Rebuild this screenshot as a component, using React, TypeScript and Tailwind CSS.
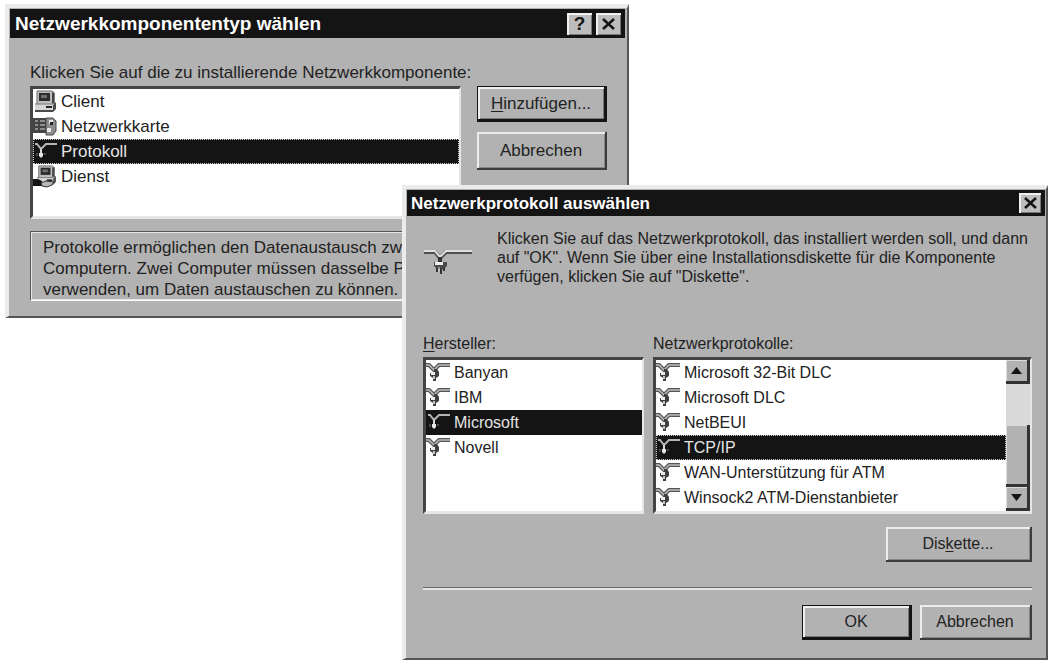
import { useState, type ReactNode } from "react";

type IconName = "client" | "card" | "protocol" | "service";

type ListItem = {
  label: string;
  icon: IconName;
};

const COMPONENT_TYPES: ListItem[] = [
  { label: "Client", icon: "client" },
  { label: "Netzwerkkarte", icon: "card" },
  { label: "Protokoll", icon: "protocol" },
  { label: "Dienst", icon: "service" },
];

const VENDORS: ListItem[] = [
  { label: "Banyan", icon: "protocol" },
  { label: "IBM", icon: "protocol" },
  { label: "Microsoft", icon: "protocol" },
  { label: "Novell", icon: "protocol" },
];

const PROTOCOLS: ListItem[] = [
  { label: "Microsoft 32-Bit DLC", icon: "protocol" },
  { label: "Microsoft DLC", icon: "protocol" },
  { label: "NetBEUI", icon: "protocol" },
  { label: "TCP/IP", icon: "protocol" },
  { label: "WAN-Unterstützung für ATM", icon: "protocol" },
  { label: "Winsock2 ATM-Dienstanbieter", icon: "protocol" },
];

/* ---------------- ICONS ---------------- */

function Computer() {
  return (
    <>
      <path d="M2 1h16l2 2v11H2z" fill="#7d7d7d" />
      <path d="M2 1h15v13H2z" fill="#bdbdbd" />
      <path d="M2 1h15M2 1v13" stroke="#6b6b6b" fill="none" />
      <path d="M4 3h11v8H4z" fill="#2b2b2b" />
      <path d="M6 5h6v3H6z" fill="#6f6f6f" />
      <path d="M0 15h18l3-3v7l-3 3H0z" fill="#4a4a4a" />
      <path d="M0 14h18v6H0z" fill="#d6d6d6" />
      <path d="M0 14h18" stroke="#777" />
      <path d="M11 17h6" stroke="#222" strokeWidth="2" />
      <path d="M18 3v10" stroke="#444" strokeWidth="2" />
    </>
  );
}

function ItemIcon({ name, selected }: { name: IconName; selected: boolean }) {
  if (name === "client") {
    return (
      <svg width="24" height="23" viewBox="0 0 24 23" aria-hidden="true">
        <g transform="translate(2 0)">
          <Computer />
        </g>
      </svg>
    );
  }
  if (name === "service") {
    return (
      <svg width="24" height="23" viewBox="0 0 24 23" aria-hidden="true">
        <g transform="translate(4 0) scale(.9)">
          <Computer />
        </g>
        <path d="M0 14h5l4 2v5H0z" fill="#141414" />
        <path d="M8 18l5-2 8 1-2 3-5 2-5-1z" fill="#b8b8b8" stroke="#333" />
      </svg>
    );
  }
  if (name === "card") {
    return (
      <svg width="24" height="23" viewBox="0 0 24 23" aria-hidden="true">
        <path d="M0 3h13v15H0z" fill="#444" />
        <path d="M2 6h3M2 10h3M2 14h3M7 6h5M7 10h5M7 14h5" stroke="#a5a5a5" strokeWidth="1.500" />
        <path d="M13 3h7l3 3v10l-3 4h-7z" fill="#8d8d8d" stroke="#4a4a4a" />
        <path d="M16 5h4v4h-4zM14 13h4v4h-4z" fill="#e8e8e8" />
        <path d="M17 7h3v3h-3z" fill="#222" />
      </svg>
    );
  }
  return (
    <svg width="24" height="23" viewBox="0 0 24 23" fill="none" aria-hidden="true">
      {selected ? (
        <>
          <path d="M2 4h2l4 5 5-5h11" stroke="#b5b5b5" strokeWidth="2" />
          <path d="M8 9v4" stroke="#d8d8d8" strokeWidth="2" />
          <path d="M6 13h4v3l-2 2-2-2z" fill="#e5e5e5" />
          <path d="M4 13v3M12 13v2" stroke="#777" />
        </>
      ) : (
        <>
          <path d="M0 4h3l5 5 5-5h11" stroke="#555" strokeWidth="4" />
          <path d="M0 4h3l5 5 5-5h11" stroke="#bdbdbd" strokeWidth="1.500" />
          <path d="M8 8h3l2 3v4l-3 2v3H7v-3l-3-2v-3h4z" fill="#3f3f3f" />
          <path d="M5 11h4v3H5z" fill="#ececec" />
          <path d="M7 15h2v3H7z" fill="#c4c4c4" />
        </>
      )}
    </svg>
  );
}

function CableIcon() {
  return (
    <svg width="50" height="28" viewBox="0 0 50 28" fill="none" aria-hidden="true">
      <path d="M1 5h11l5 6 6-6h26" stroke="#4f4f4f" strokeWidth="4" />
      <path d="M1 4h11l5 6 6-6h26" stroke="#dedede" strokeWidth="2" />
      <path d="M17 10v6" stroke="#333" strokeWidth="4" />
      <path d="M11 15h13v4l-3 3h-7l-3-3z" fill="#4a4a4a" />
      <path d="M12 15h8v3h-8z" fill="#efefef" />
      <path d="M14 21v4M18 21v6M21 21v3" stroke="#333" strokeWidth="2" />
      <path d="M16 20v4" stroke="#ddd" />
    </svg>
  );
}

function CloseGlyph() {
  return (
    <svg width="13" height="12" viewBox="0 0 13 12" aria-hidden="true">
      <path d="M1 1l11 10M12 1L1 11" stroke="#141414" strokeWidth="2.500" />
    </svg>
  );
}

/* ---------------- CONTROLS ---------------- */

function Button({
  children,
  primary = false,
  className,
}: {
  children: ReactNode;
  primary?: boolean;
  className: string;
}) {
  const edge = primary
    ? "border-t border-l border-b-3 border-r-3 border-[#141414] shadow-[inset_2px_2px_0_#f0f0f0,inset_-1px_-1px_0_#777]"
    : "border-b-2 border-r-2 border-[#3c3c3c] shadow-[inset_2px_2px_0_#ececec,inset_-1px_-1px_0_#858585]";
  return (
    <button type="button" className={`flex items-center justify-center bg-[#b2b2b2] ${edge} ${className}`}>
      {children}
    </button>
  );
}

function TitleButton({ label, className, children }: { label: string; className: string; children: ReactNode }) {
  return (
    <button
      type="button"
      aria-label={label}
      className={`flex items-center justify-center bg-[#bdbdbd] font-bold text-[#141414] shadow-[inset_2px_2px_0_#f0f0f0,inset_-1px_-1px_0_#777] ${className}`}
    >
      {children}
    </button>
  );
}

function ListBox({
  name,
  items,
  initial,
  focused = false,
}: {
  name: string;
  items: ListItem[];
  initial: string;
  focused?: boolean;
}) {
  const [value, setValue] = useState(initial);
  return (
    <div role="radiogroup" aria-labelledby={`${name}-label`} className="min-w-0 flex-1">
      {items.map((item) => {
        const selected = item.label === value;
        return (
          <label
            key={item.label}
            className={`flex h-[25px] items-center gap-1 ${
              selected ? "bg-[#141414] text-[#e4e4e4]" : "text-[#222]"
            } ${selected && focused ? "outline-1 -outline-offset-1 outline-dotted outline-[#d0d0d0]" : ""}`}
          >
            <input
              type="radio"
              name={name}
              checked={selected}
              onChange={() => setValue(item.label)}
              className="sr-only"
            />
            <ItemIcon name={item.icon} selected={selected} />
            <span className="whitespace-nowrap">{item.label}</span>
          </label>
        );
      })}
    </div>
  );
}

const SUNKEN =
  "border-t-3 border-l-3 border-r-2 border-b-3 border-t-[#444] border-l-[#444] border-r-[#e6e6e6] border-b-[#e6e6e6] bg-white";

const WINDOW =
  "absolute border-t-4 border-l-4 border-r-2 border-b-2 border-t-[#ebebeb] border-l-[#ebebeb] border-r-[#555] border-b-[#555] bg-[#b2b2b2] pt-px pl-px text-[#222]";

function ScrollBar() {
  const raised = "bg-[#b2b2b2] border-r-3 border-b-3 border-[#333] shadow-[inset_1px_1px_0_#dcdcdc]";
  return (
    <div className="flex w-6 shrink-0 flex-col bg-[#dadada]">
      <button type="button" aria-label="Nach oben" className={`flex h-6 items-center justify-center ${raised}`}>
        <svg width="11" height="7" viewBox="0 0 11 7" aria-hidden="true">
          <path d="M5.500 0L11 7H0z" fill="#141414" />
        </svg>
      </button>
      <div className="flex flex-1 flex-col justify-end">
        <div className={`h-[62px] ${raised}`} />
      </div>
      <button type="button" aria-label="Nach unten" className={`flex h-6 items-center justify-center ${raised}`}>
        <svg width="11" height="7" viewBox="0 0 11 7" aria-hidden="true">
          <path d="M0 0h11L5.500 7z" fill="#141414" />
        </svg>
      </button>
    </div>
  );
}

/* ---------------- WINDOWS ---------------- */

function ComponentTypeDialog() {
  return (
    <section className={`${WINDOW} top-1 left-[5px] w-[624px] pb-[15px] text-[17px] leading-[21px]`}>
      <header className="mr-[2px] flex h-[29px] items-center justify-between bg-[#141414] pr-1 pl-[5px] text-white">
        <h1 className="text-[19px] font-bold">Netzwerkkomponententyp wählen</h1>
        <div className="flex gap-1">
          <TitleButton label="Hilfe" className="h-[22px] w-[25px] text-[19px]">
            ?
          </TitleButton>
          <TitleButton label="Schließen" className="h-[22px] w-[25px]">
            <CloseGlyph />
          </TitleButton>
        </div>
      </header>

      <div className="px-5 pt-6">
        <p id="component-label">Klicken Sie auf die zu installierende Netzwerkkomponente:</p>
        <div className="mt-[3px] flex gap-4">
          <div className={`flex h-[133px] min-w-0 flex-1 ${SUNKEN}`}>
            <ListBox name="component" items={COMPONENT_TYPES} initial="Protokoll" focused />
          </div>
          <div className="flex w-[130px] flex-col gap-[10px]">
            <Button primary className="h-9">
              <span>
                <u className="underline-offset-2">H</u>inzufügen...
              </span>
            </Button>
            <Button className="h-[38px]">Abbrechen</Button>
          </div>
        </div>

        <p className="mt-3 border border-t-[#555] border-l-[#555] border-r-white border-b-white pt-[5px] pl-3 whitespace-nowrap shadow-[inset_1px_1px_0_#e6e6e6,inset_-1px_-1px_0_#e6e6e6]">
          Protokolle ermöglichen den Datenaustausch zwischen
          <br />
          Computern. Zwei Computer müssen dasselbe Protokoll
          <br />
          verwenden, um Daten austauschen zu können.
        </p>
      </div>
    </section>
  );
}

function ProtocolDialog() {
  return (
    <section className={`${WINDOW} top-[185px] left-[402px] w-[646px] pb-[18px] text-[16px] leading-[19px]`}>
      <header className="mr-px flex h-[26px] items-center justify-between bg-[#141414] pr-1 pl-1 text-white">
        <h2 className="text-[17px] font-bold">Netzwerkprotokoll auswählen</h2>
        <TitleButton label="Schließen" className="h-5 w-[22px]">
          <CloseGlyph />
        </TitleButton>
      </header>

      <div className="pr-[14px] pl-4">
        <div className="flex gap-6 pt-[13px]">
          <div className="pt-[18px]">
            <CableIcon />
          </div>
          <p className="whitespace-nowrap">
            Klicken Sie auf das Netzwerkprotokoll, das installiert werden soll, und dann
            <br />
            auf "OK". Wenn Sie über eine Installationsdiskette für die Komponente
            <br />
            verfügen, klicken Sie auf "Diskette".
          </p>
        </div>

        <div className="mt-12 flex gap-[9px]">
          <div className="w-[221px]">
            <p id="vendor-label">
              <u className="underline-offset-2">H</u>ersteller:
            </p>
            <div className={`mt-1 flex h-[157px] ${SUNKEN}`}>
              <ListBox name="vendor" items={VENDORS} initial="Microsoft" />
            </div>
          </div>
          <div className="min-w-0 flex-1">
            <p id="protocol-label">Netzwerkprotokolle:</p>
            <div className={`mt-1 flex h-[157px] ${SUNKEN}`}>
              <ListBox name="protocol" items={PROTOCOLS} initial="TCP/IP" focused />
              <ScrollBar />
            </div>
          </div>
        </div>

        <div className="mt-[13px] flex justify-end">
          <Button className="h-[35px] w-[146px]">
            <span>
              Dis<u className="underline-offset-2">k</u>ette...
            </span>
          </Button>
        </div>

        <hr className="mt-[25px] h-[3px] border-t border-b-2 border-t-[#666] border-b-[#e6e6e6]" />

        <div className="mt-[15px] flex justify-end gap-2">
          <Button primary className="h-[35px] w-[110px]">
            OK
          </Button>
          <Button className="h-[35px] w-28">Abbrechen</Button>
        </div>
      </div>
    </section>
  );
}

export default function App() {
  return (
    <main className="relative min-h-screen overflow-hidden bg-white font-['Liberation_Sans',Arial,sans-serif]">
      <ComponentTypeDialog />
      <ProtocolDialog />
    </main>
  );
}
